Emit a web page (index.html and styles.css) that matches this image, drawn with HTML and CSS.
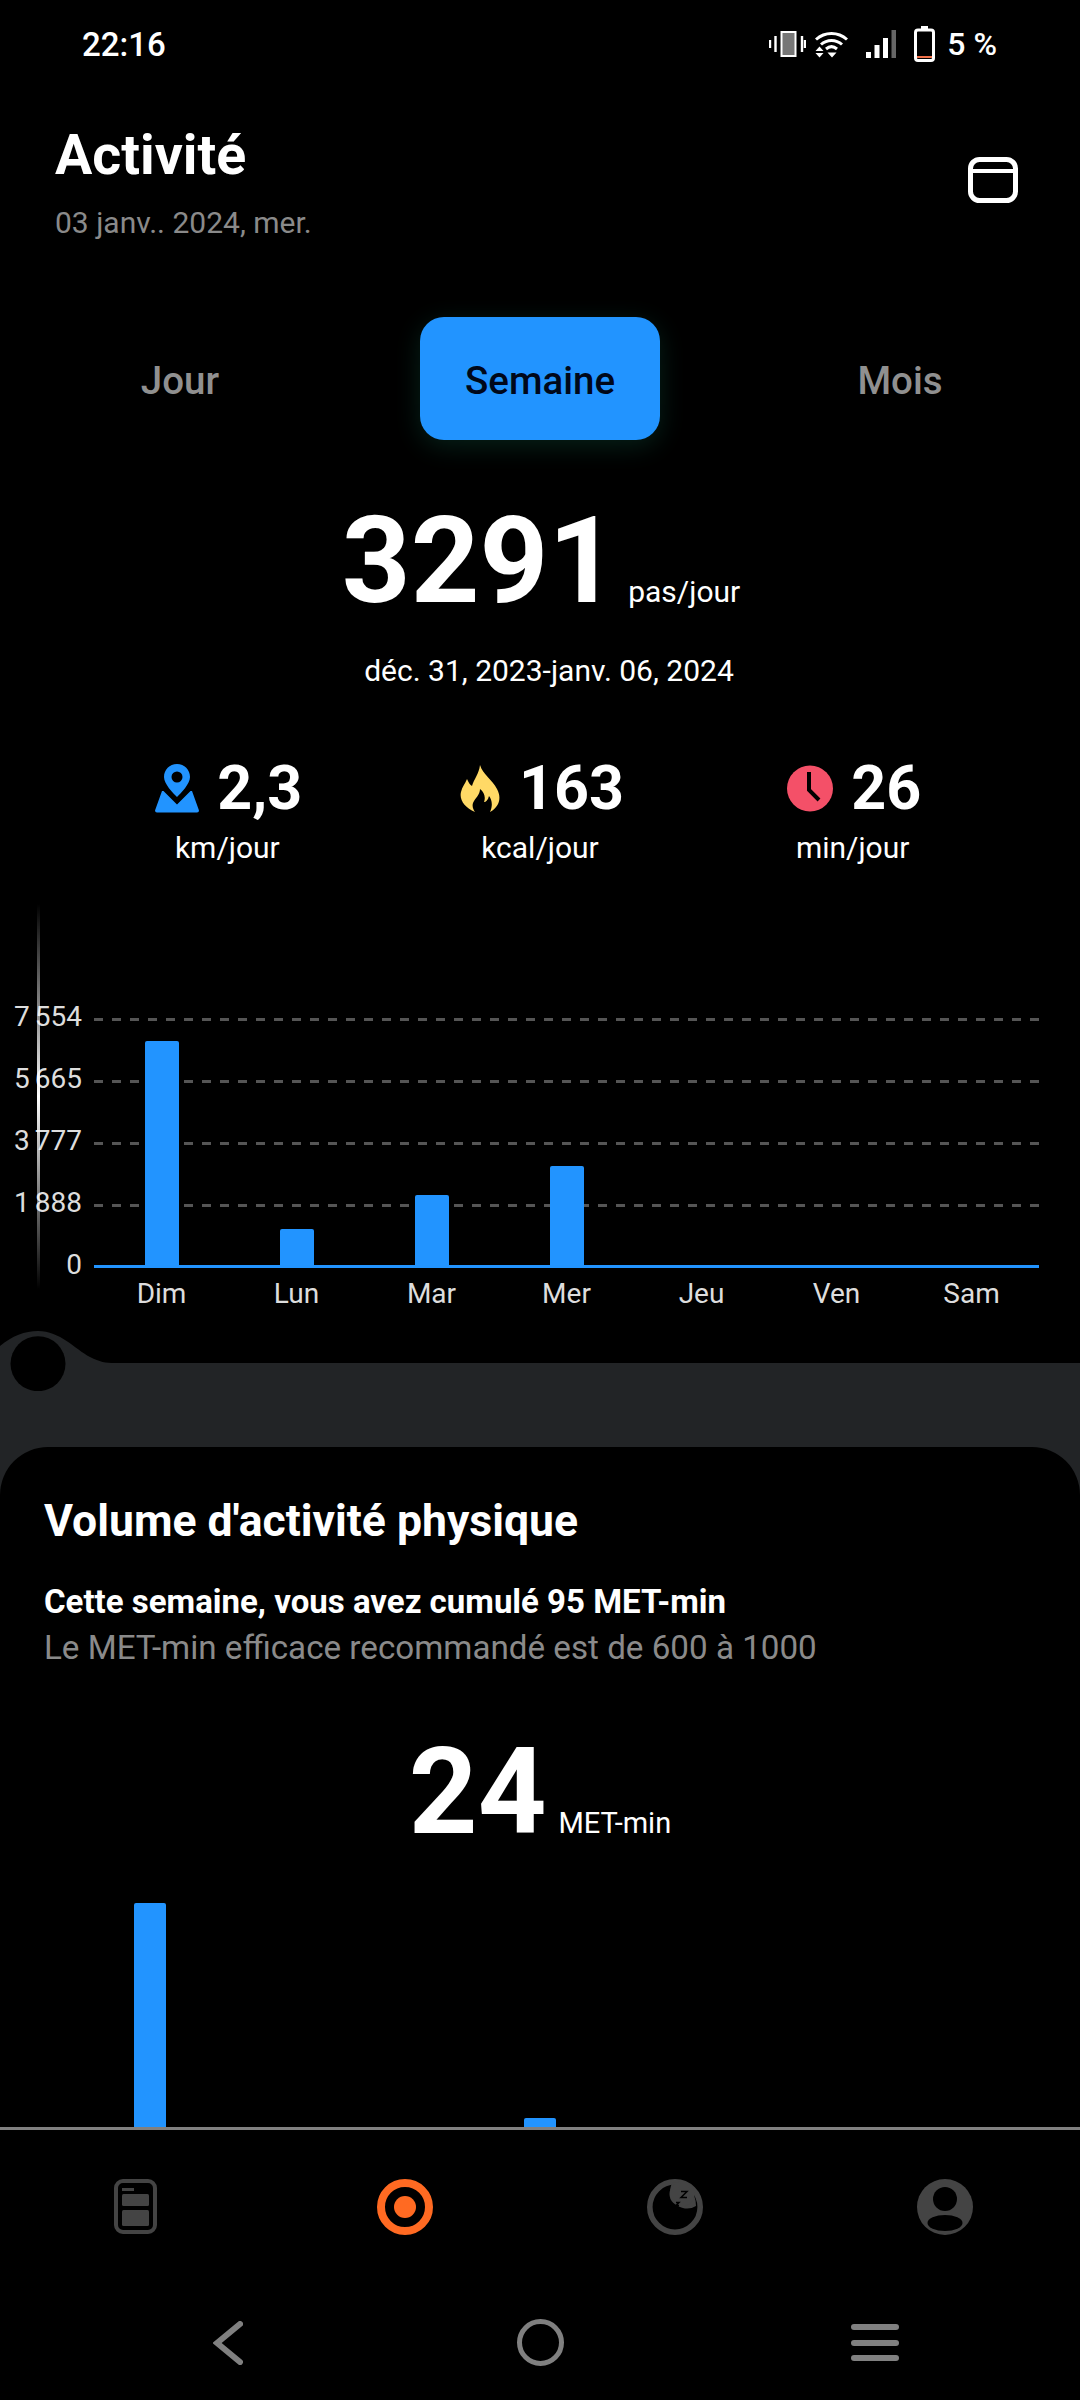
FILE: index.html
```html
<!DOCTYPE html>
<html lang="fr">
<head>
<meta charset="utf-8">
<title>Activité</title>
<link rel="stylesheet" href="styles.css">
</head>
<body>
<div class="screen">
  <div class="status">
    <span class="time">22:16</span>
    <div class="status-icons">
      <svg class="ic-vib" viewBox="0 0 37 26"><rect x="12.500" y="1" width="14" height="24" fill="#777" stroke="#fff" stroke-width="2"/><path d="M6.500 5v16M33 5v16M1 9v8M36 9v8" stroke="#fff" stroke-width="2.400" fill="none"/></svg>
      <svg class="ic-wifi" viewBox="0 0 33 27"><path d="M1 8.500C10 0.500 23 0.500 32 8.500M6 13.500C12 8 21 8 27 13.500M11 18C14.500 15 18.500 15 22 18" fill="none" stroke="#fff" stroke-width="3"/><path d="M4.500 15.500L8.500 20H0.500ZM0.500 22H8.500L4.500 26.500ZM12.500 21.500H21.500L17 26.500Z" fill="#fff"/></svg>
      <svg class="ic-sig" viewBox="0 0 30 28"><rect x="0" y="22" width="5" height="6" fill="#fff"/><rect x="8.500" y="15" width="5" height="13" fill="#fff"/><rect x="17" y="8" width="5" height="20" fill="#fff"/><rect x="25.500" y="0" width="4.500" height="28" fill="#666"/></svg>
      <svg class="ic-bat" viewBox="0 0 21 36"><path d="M7 0h7v3H7z" fill="#fff"/><rect x="1.500" y="4" width="18" height="30.500" rx="2.500" fill="none" stroke="#fff" stroke-width="3"/><rect x="3" y="30" width="15" height="2" fill="#f0714a"/></svg>
      <span class="pct">5 %</span>
    </div>
  </div>

  <header class="head">
    <div>
      <h1 class="title">Activité</h1>
      <p class="date">03 janv.. 2024, mer.</p>
    </div>
    <svg class="cal" viewBox="0 0 50 46"><rect x="2.500" y="2.500" width="45" height="41" rx="9" fill="none" stroke="#fff" stroke-width="5"/><path d="M3 14h44" stroke="#fff" stroke-width="4"/></svg>
  </header>

  <nav class="tabs">
    <span class="tab">Jour</span>
    <span class="tab tab-on">Semaine</span>
    <span class="tab">Mois</span>
  </nav>

  <div class="total">
    <span class="big">3291</span><span class="unit">pas/jour</span>
  </div>
  <p class="range">déc. 31, 2023-janv. 06, 2024</p>

  <div class="stats">
    <div class="stat">
      <div class="stat-top">
        <svg class="ic-pin" viewBox="0 0 44 49"><path d="M22 0C14.500 0 9 5.800 9 13C9 20 18 29 22 33C26 29 35 20 35 13C35 5.800 29.500 0 22 0ZM22 7.500A5.500 5.500 0 1 1 22 18.500A5.500 5.500 0 1 1 22 7.500Z" fill="#2294ff" fill-rule="evenodd"/><path d="M8.500 27L22 40.500L35.500 27L37 27L44 46.500Q44 48.500 42 48.500H2Q0 48.500 0 46.500L7 27Z" fill="#2294ff"/></svg>
        <span class="num">2,3</span>
      </div>
      <span class="lab">km/jour</span>
    </div>
    <div class="stat">
      <div class="stat-top">
        <svg class="ic-flame" viewBox="0 0 42 47"><path d="M21 0C24 10 33 14 38 24C43 33 40 42 31 47C34 40 33 35 30 31C29 35 27 37 25 37C27 32 25 27 21 24C21 30 16 33 14 38C13 41 14 44 16 47C6 43 0 35 2 27C3 22 6 19 8 14C10 18 11 20 13 21C15 14 20 9 21 0Z" fill="#ffd966"/></svg>
        <span class="num">163</span>
      </div>
      <span class="lab">kcal/jour</span>
    </div>
    <div class="stat">
      <div class="stat-top">
        <svg class="ic-clock" viewBox="0 0 46 47"><circle cx="23" cy="23.500" r="23" fill="#f45068"/><path d="M22 7V25L32 35" fill="none" stroke="#000" stroke-width="4"/></svg>
        <span class="num">26</span>
      </div>
      <span class="lab">min/jour</span>
    </div>
  </div>

  <section class="chart">
    <div class="fade-line"></div>
    <div class="axis">
      <span class="tick">7 554</span>
      <span class="tick">5 665</span>
      <span class="tick">3 777</span>
      <span class="tick">1 888</span>
      <span class="tick">0</span>
    </div>
    <div class="plot-wrap">
      <div class="plot">
        <div class="grid"><i></i><i></i><i></i><i></i></div>
        <div class="cols">
          <div class="col"><div class="bar" style="height:224px"></div></div>
          <div class="col"><div class="bar" style="height:36px"></div></div>
          <div class="col"><div class="bar" style="height:70px"></div></div>
          <div class="col"><div class="bar" style="height:99px"></div></div>
          <div class="col"></div>
          <div class="col"></div>
          <div class="col"></div>
        </div>
      </div>
      <div class="days">
        <span>Dim</span><span>Lun</span><span>Mar</span><span>Mer</span><span>Jeu</span><span>Ven</span><span>Sam</span>
      </div>
    </div>
  </section>

  <section class="sheet">
    <svg class="bump" viewBox="0 0 115 60"><path d="M0 15C12 5 25 0 38 0C60 0 75 18 90 26C100 31 105 32 115 32V34H0Z" fill="#222426"/><circle cx="38" cy="32.700" r="27.500" fill="#000"/></svg>
    <div class="card">
      <h2 class="card-title">Volume d'activité physique</h2>
      <p class="card-strong">Cette semaine, vous avez cumulé 95 MET-min</p>
      <p class="card-note">Le MET-min efficace recommandé est de 600 à 1000</p>
      <div class="met">
        <span class="met-big">24</span><span class="unit unit-met">MET-min</span>
      </div>
      <div class="met-bars">
        <div class="met-slot"><div class="met-bar" style="height:224px"></div></div>
        <div class="met-slot"></div>
        <div class="met-slot"><div class="met-bar" style="height:9px"></div></div>
        <div class="met-slot"></div>
      </div>
    </div>
  </section>

  <div class="tabbar">
    <svg class="nav-ic nav-doc" viewBox="0 0 43 55"><rect x="2" y="2" width="39" height="51" rx="7" fill="none" stroke="#444" stroke-width="4"/><rect x="8" y="9" width="12" height="3" fill="#444"/><rect x="8" y="15" width="27" height="12" rx="1.500" fill="#444"/><rect x="8" y="31" width="27" height="16" rx="1.500" fill="#444"/></svg>
    <svg class="nav-ic" viewBox="0 0 56 56"><circle cx="28" cy="28" r="24" fill="none" stroke="#ff6a22" stroke-width="8"/><circle cx="28" cy="28" r="11" fill="#ff6a22"/></svg>
    <svg class="nav-ic" viewBox="0 0 56 56"><circle cx="28" cy="28" r="25.200" fill="none" stroke="#444" stroke-width="5.600"/><path d="M26 3A17 17 0 0 0 49 27A23 23 0 0 0 26 3Z" fill="#444"/><circle cx="35" cy="15" r="12.500" fill="#444"/><path d="M34 12.500h6l-6 6h6M29 23.500h3l-3 3h3" fill="none" stroke="#000" stroke-width="1.500"/></svg>
    <svg class="nav-ic" viewBox="0 0 56 56"><circle cx="28" cy="28" r="28" fill="#444"/><circle cx="28" cy="20" r="12" fill="#000"/><ellipse cx="28" cy="44" rx="17.500" ry="8" fill="#000"/></svg>
  </div>

  <div class="sysnav">
    <svg class="sys-back" viewBox="0 0 30 44"><path d="M27 3L4 22L27 41" fill="none" stroke="#808080" stroke-width="6" stroke-linecap="round"/></svg>
    <svg class="sys-home" viewBox="0 0 47 47"><circle cx="23.500" cy="23.500" r="21" fill="none" stroke="#808080" stroke-width="5"/></svg>
    <div class="sys-menu"><i></i><i></i><i></i></div>
  </div>
</div>
</body>
</html>
```

FILE: styles.css
```css
* { box-sizing: border-box; }
html, body { margin: 0; padding: 0; background: #000; }
body { font-family: Roboto, "Noto Sans", sans-serif; color: #fff; }
.screen { width: 1080px; height: 2400px; overflow: hidden; background: #000; position: relative; }

.status { height: 88px; display: flex; align-items: center; justify-content: space-between; padding: 0 83px 0 82px; }
.time { font-size: 33px; font-weight: 500; }
.status-icons { display: flex; align-items: center; height: 88px; }
.status-icons svg { display: block; flex: none; }
.ic-vib { width: 37px; height: 26px; margin-right: 9px; }
.ic-wifi { width: 33px; height: 27px; margin-right: 18px; }
.ic-sig { width: 30px; height: 28px; margin-right: 18px; }
.ic-bat { width: 21px; height: 36px; margin-right: 12px; }
.pct { font-size: 32px; line-height: 1; font-weight: 500; }

.head { display: flex; justify-content: space-between; align-items: flex-start; padding: 36px 62px 0 55px; }
.title { margin: 0; font-size: 55.500px; line-height: 64px; font-weight: 700; }
.date { margin: 15px 0 0; font-size: 30px; line-height: 40px; color: #8a8a8a; }
.cal { width: 50px; height: 46px; margin-top: 33px; flex: none; }

.tabs { margin-top: 74px; display: grid; grid-template-columns: repeat(3, 360px); height: 123px; justify-items: center; }
.tab { display: flex; align-items: center; justify-content: center; width: 240px; height: 123px; padding-top: 4px; border-radius: 24px; font-size: 38.500px; font-weight: 500; color: #909090; }
.tab-on { background: #2294ff; color: #00081a; box-shadow: 0 6px 26px rgba(20, 120, 90, 0.28); }

.total { margin-top: 56px; display: flex; justify-content: center; align-items: baseline; height: 131px; padding-left: 2px; }
.big { font-size: 120px; line-height: 130px; font-weight: 700; }
.unit { font-size: 30px; margin-left: 11px; }
.unit-met { font-size: 29px; margin-left: 12px; }
.range { margin: 24px 0 0; padding-left: 18px; font-size: 30px; line-height: 40px; text-align: center; }

.stats { margin-top: 59px; padding: 0 71px; display: grid; grid-template-columns: repeat(3, 1fr); }
.stat { display: flex; flex-direction: column; align-items: center; }
.stat-top { display: flex; align-items: center; height: 76px; gap: 18px; padding-left: 3px; }
.num { font-size: 61px; line-height: 76px; font-weight: 700; }
.lab { font-size: 30px; line-height: 40px; margin-top: 1.500px; }
.ic-pin { width: 44px; height: 49px; }
.ic-flame { width: 42px; height: 47px; }
.ic-clock { width: 46px; height: 47px; }

.chart { position: relative; height: 474px; margin-top: 21px; display: flex; align-items: flex-start; padding-top: 130px; }
.fade-line { position: absolute; left: 37px; top: 15px; width: 3px; height: 385px; background: linear-gradient(to bottom, transparent, #fff 50%, transparent); }
.axis { width: 82px; height: 248px; margin-top: -2px; display: flex; flex-direction: column; justify-content: space-between; align-items: flex-end; flex: none; }
.tick { height: 0; line-height: 0; font-size: 28px; word-spacing: -2px; color: #ddd; white-space: nowrap; }
.plot-wrap { margin-left: 12px; width: 945px; }
.plot { position: relative; height: 248px; }
.grid { position: absolute; inset: -1px 0 0 0; display: flex; flex-direction: column; gap: 59px; }
.grid i { display: block; height: 3px; background: repeating-linear-gradient(to right, #555 0 9px, transparent 9px 18px); }
.cols { position: absolute; left: 0; right: 0; bottom: -1px; height: 248px; display: grid; grid-template-columns: repeat(7, 135px); align-items: end; justify-items: center; border-bottom: 3px solid #2294ff; }
.col { display: flex; align-items: flex-end; }
.bar { width: 34px; background: #2294ff; border-radius: 2px 2px 0 0; }
.days { display: grid; grid-template-columns: repeat(7, 135px); justify-items: center; margin-top: 9px; font-size: 28px; line-height: 36px; color: #ddd; }

.sheet { position: relative; height: 764.500px; background: #222426; padding-top: 84px; display: flex; flex-direction: column; }
.bump { position: absolute; left: 0; top: -32px; width: 115px; height: 60px; }
.card { flex: 1; min-height: 0; background: #000; border-radius: 48px 48px 0 0; padding: 0 44px; display: flex; flex-direction: column; overflow: hidden; }
.card-title { margin: 48px 0 0; font-size: 44.500px; line-height: 52px; font-weight: 700; }
.card-strong { margin: 33px 0 0; font-size: 33px; line-height: 44px; font-weight: 700; }
.card-note { margin: 2px 0 0; font-size: 33.200px; line-height: 44px; color: #8a8a8a; }
.met { margin-top: 62px; display: flex; justify-content: center; align-items: baseline; height: 120px; }
.met-big { font-size: 120px; line-height: 120px; font-weight: 700; }
.met-bars { flex: 1; margin: 0 -44px; display: grid; grid-template-columns: repeat(4, 195px); padding-left: 52px; align-items: end; justify-items: center; }
.met-slot { display: flex; align-items: flex-end; }
.met-bar { width: 32px; background: #2294ff; border-radius: 2px 2px 0 0; }

.tabbar { height: 159.500px; border-top: 3px solid #808080; display: grid; grid-template-columns: repeat(4, 270px); padding: 49px 0 0; justify-items: center; align-items: start; }
.nav-ic { width: 56px; height: 56px; display: block; }
.nav-doc { width: 43px; height: 55px; }

.sysnav { display: flex; align-items: center; padding: 0 0 1.500px 212.500px; height: 113.500px; }
.sys-back { width: 30px; height: 44px; flex: none; }
.sys-home { width: 47px; height: 47px; margin-left: 274.500px; flex: none; }
.sys-menu { width: 48px; margin-left: 287px; display: flex; flex-direction: column; gap: 9.500px; flex: none; }
.sys-menu i { display: block; height: 6px; border-radius: 3px; background: #808080; }
```
